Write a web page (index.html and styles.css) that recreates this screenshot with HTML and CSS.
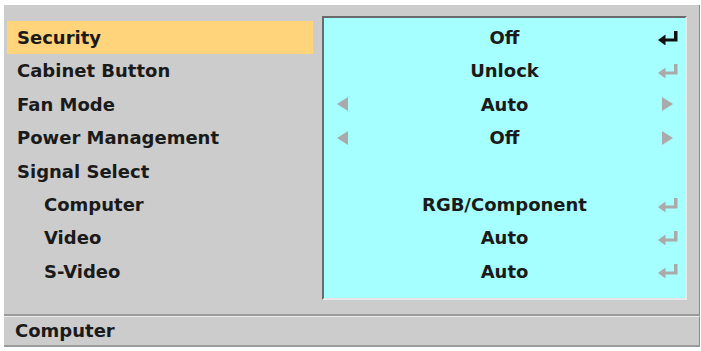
FILE: index.html
```html
<!DOCTYPE html>
<html lang="en">
<head>
  <meta charset="UTF-8" />
  <title>Setup - Options</title>
  <link rel="stylesheet" href="styles.css">
</head>
<body>

<!-- Menu frame -->
<div class="frame">
  <div class="menu">
    <div class="item selected">Security</div>
    <div class="item">Cabinet Button</div>
    <div class="item">Fan Mode</div>
    <div class="item">Power Management</div>
    <div class="item">Signal Select</div>
    <div class="item sub">Computer</div>
    <div class="item sub">Video</div>
    <div class="item sub">S-Video</div>
  </div>

  <div class="panel">
    <div class="row">
      <span></span><span class="value">Off</span>
      <span class="icon"><svg class="enter active" width="20" height="14" viewBox="0 0 20 14"><path d="M16 0h3.5v10.5H6V7.5h10z M0 9L7.5 3.5v11z"/></svg></span>
    </div>
    <div class="row">
      <span></span><span class="value">Unlock</span>
      <span class="icon"><svg class="enter" width="20" height="14" viewBox="0 0 20 14"><path d="M16 0h3.5v10.5H6V7.5h10z M0 9L7.5 3.5v11z"/></svg></span>
    </div>
    <div class="row">
      <span class="left"><svg class="tri" width="11" height="14" viewBox="0 0 11 14"><path d="M11 0L0 7l11 7z"/></svg></span>
      <span class="value">Auto</span>
      <span class="icon right"><svg class="tri" width="11" height="14" viewBox="0 0 11 14"><path d="M0 0l11 7L0 14z"/></svg></span>
    </div>
    <div class="row">
      <span class="left"><svg class="tri" width="11" height="14" viewBox="0 0 11 14"><path d="M11 0L0 7l11 7z"/></svg></span>
      <span class="value">Off</span>
      <span class="icon right"><svg class="tri" width="11" height="14" viewBox="0 0 11 14"><path d="M0 0l11 7L0 14z"/></svg></span>
    </div>
    <div class="row"></div>
    <div class="row">
      <span></span><span class="value">RGB/Component</span>
      <span class="icon"><svg class="enter" width="20" height="14" viewBox="0 0 20 14"><path d="M16 0h3.5v10.5H6V7.5h10z M0 9L7.5 3.5v11z"/></svg></span>
    </div>
    <div class="row">
      <span></span><span class="value">Auto</span>
      <span class="icon"><svg class="enter" width="20" height="14" viewBox="0 0 20 14"><path d="M16 0h3.5v10.5H6V7.5h10z M0 9L7.5 3.5v11z"/></svg></span>
    </div>
    <div class="row">
      <span></span><span class="value">Auto</span>
      <span class="icon"><svg class="enter" width="20" height="14" viewBox="0 0 20 14"><path d="M16 0h3.5v10.5H6V7.5h10z M0 9L7.5 3.5v11z"/></svg></span>
    </div>
  </div>
</div>

<!-- Status bar -->
<div class="status">Computer</div>

</body>
</html>
```

FILE: styles.css
```css
body {
  margin: 0;
  background-color: #fff;
  font-family: 'DejaVu Sans', sans-serif;
  font-weight: bold;
  font-size: 18px;
  color: #1a1a1a;
}

.frame {
  margin: 5px 1px 0 4px;
  height: 298px;
  padding: 11px 11px 0 3px;
  background-color: #cccccc;
  border-right: 1px solid #8a8a8a;
  border-bottom: 2px solid #9a9a9a;
  display: flex;
  align-items: flex-start;
  gap: 9px;
}

.menu { width: 306px; margin-top: 5px; }
.item { height: 33.4px; line-height: 33.4px; padding-left: 10px; white-space: nowrap; }
.item.selected { background-color: #ffd47a; }
.item.sub { padding-left: 37px; }

.panel {
  width: 361px;
  height: 277px;
  padding-top: 3px;
  background-color: #a6ffff;
  border: 2px solid;
  border-color: #6a6a6a #e8e8e8 #e8e8e8 #6a6a6a;
}

.row {
  height: 33.4px;
  display: grid;
  grid-template-columns: 40px 1fr 40px;
  align-items: center;
}

.value { text-align: center; line-height: 33.4px; }
.left { display: flex; padding-left: 13px; }
.icon { display: flex; justify-content: flex-end; padding-right: 7px; }
.icon.right { padding-right: 12px; }

.enter, .tri { fill: #aaaaaa; display: block; }
.enter.active { fill: #111; }

.status {
  margin: 0 1px 0 4px;
  height: 28px;
  line-height: 28px;
  padding-left: 11px;
  background-color: #cccccc;
  border-top: 1px solid #ececec;
  border-right: 1px solid #8a8a8a;
  border-bottom: 2px solid #9a9a9a;
}
```
